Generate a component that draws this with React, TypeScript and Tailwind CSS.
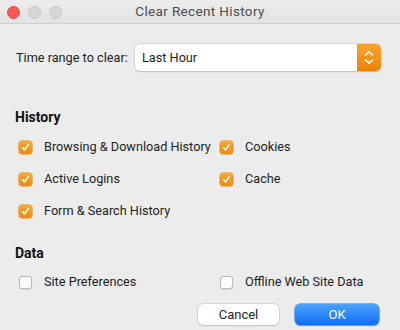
import React from "react";

function Check({ checked }: { checked: boolean }) {
  if (checked) {
    return (
      <span className="flex h-[13px] w-[13px] items-center justify-center rounded-[3px] bg-gradient-to-b from-[#f6a935] to-[#ef8c0c] shadow-[0_0_0_0.5px_#d9820c]">
        <svg width="9" height="9" viewBox="0 0 9 9">
          <path d="M1.6 4.8 L3.6 6.9 L7.4 1.6" fill="none" stroke="#fff" strokeWidth="1.5" strokeLinecap="round" strokeLinejoin="round" />
        </svg>
      </span>
    );
  }
  return <span className="block h-[13px] w-[13px] rounded-[3px] border border-[#b9b9b9] bg-white shadow-[0_0.5px_1px_rgba(0,0,0,0.08)]" />;
}

function Item({ label, checked, w }: { label: string; checked: boolean; w?: string }) {
  return (
    <div className={`flex h-[20px] items-center whitespace-nowrap ${w ?? ""}`}>
      <span className="ml-[19px] mr-[12px]">
        <Check checked={checked} />
      </span>
      <span className="text-[12.7px] text-[#1e1e1e]">{label}</span>
    </div>
  );
}

export default function App() {
  return (
    <div
      className="h-[330px] w-[400px] overflow-hidden bg-[#ececec]"
      style={{ fontFamily: "Roboto, 'Liberation Sans', Arial, sans-serif" }}
    >
      <div className="relative flex h-[24px] items-center justify-center border-b border-[#cfcfcf] bg-gradient-to-b from-[#ececec] to-[#e2e2e2]">
        <div className="absolute left-[7px] top-[6px] flex gap-[8px]">
          <span className="h-[13px] w-[13px] rounded-full border border-[#e2463f] bg-[#fc5753]" />
          <span className="h-[13px] w-[13px] rounded-full border border-[#cacaca] bg-[#d6d6d6]" />
          <span className="h-[13px] w-[13px] rounded-full border border-[#cacaca] bg-[#d6d6d6]" />
        </div>
        <span className="text-[13.5px] tracking-[0.35px] text-[#4d4d4d]">Clear Recent History</span>
      </div>

      <div className="mt-[20px] flex h-[27px] items-center whitespace-nowrap pl-[16px]">
        <span className="w-[119px] text-[12.7px] text-[#1e1e1e]">Time range to clear:</span>
        <div className="flex h-[27px] w-[246px] items-stretch overflow-hidden rounded-[5px] bg-white shadow-[0_0_0_0.5px_#c4c4c4,0_1px_1.5px_rgba(0,0,0,0.18)]">
          <span className="flex flex-1 items-center pl-[7px] text-[12.7px] text-[#1e1e1e]">Last Hour</span>
          <span className="flex w-[24px] items-center justify-center bg-gradient-to-b from-[#f6a630] to-[#ef8000]">
            <svg width="12" height="17" viewBox="0 0 12 17">
              <path d="M2.5 6 L6 2.8 L9.5 6" fill="none" stroke="#fff" strokeWidth="1.6" strokeLinecap="round" strokeLinejoin="round" />
              <path d="M2.5 11 L6 14.2 L9.5 11" fill="none" stroke="#fff" strokeWidth="1.6" strokeLinecap="round" strokeLinejoin="round" />
            </svg>
          </span>
        </div>
      </div>

      <div className="mt-[36px] pl-[15px] text-[14px] font-bold text-[#111]">History</div>

      <div className="mt-[9px] flex flex-col gap-[12px]">
        <div className="flex">
          <Item label="Browsing & Download History" checked w="w-[201px]" />
          <Item label="Cookies" checked />
        </div>
        <div className="flex">
          <Item label="Active Logins" checked w="w-[201px]" />
          <Item label="Cache" checked />
        </div>
        <div className="flex">
          <Item label="Form & Search History" checked w="w-[201px]" />
        </div>
      </div>

      <div className="mt-[22px] pl-[15px] text-[14px] font-bold text-[#111]">Data</div>

      <div className="mt-[8px] flex">
        <Item label="Site Preferences" checked={false} w="w-[201px]" />
        <Item label="Offline Web Site Data" checked={false} />
      </div>

      <div className="mt-[12px] flex justify-end gap-[16px] pr-[21px]">
        <button className="h-[21px] w-[81px] rounded-[5px] bg-white text-[13px] text-[#1e1e1e] shadow-[0_0_0_0.5px_#c4c4c4,0_1px_1.5px_rgba(0,0,0,0.18)]">
          Cancel
        </button>
        <button className="h-[21px] w-[84px] rounded-[5px] bg-gradient-to-b from-[#4aa2fb] to-[#0a6ef5] text-[13px] text-white shadow-[0_0_0_0.5px_#1a6ee0,0_1px_1.5px_rgba(0,0,0,0.18)]">
          OK
        </button>
      </div>
    </div>
  );
}
